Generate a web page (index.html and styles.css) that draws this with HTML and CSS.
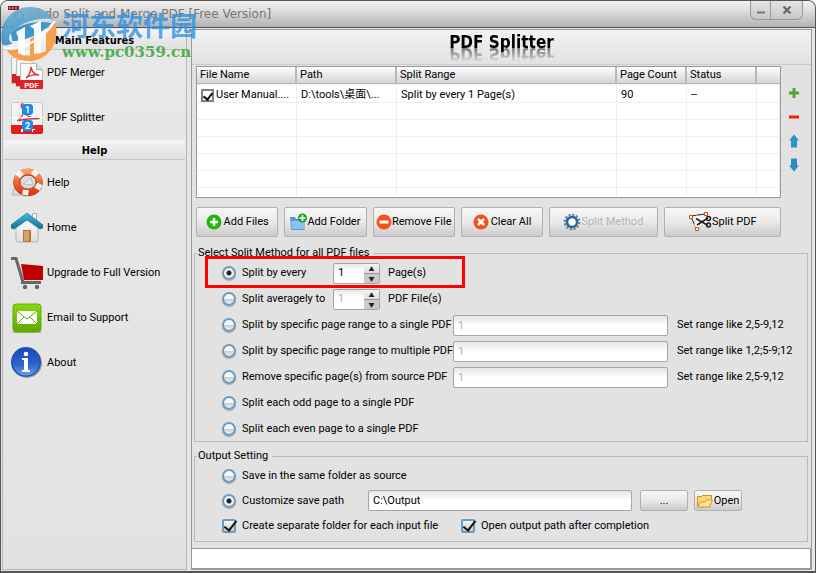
FILE: index.html
```
<!DOCTYPE html>
<html lang="en">
<head>
<meta charset="utf-8">
<title>Okdo Split and Merge PDF</title>
<link rel="stylesheet" href="styles.css">
</head>
<body>
<div class="window">
  <header class="titlebar">
    <svg class="app-icon" width="18" height="18" viewBox="0 0 18 18"><path fill="#8e1626" d="M1 1h11v4H1z"/><path stroke="#e8c6cb" d="M2 3h9" stroke-dasharray="2 1"/><circle cx="12" cy="11" r="4" fill="#fff" stroke="#1d5788" stroke-width="2.5" stroke-dasharray="2.2 1"/></svg>
    <span class="title">Okdo Split and Merge PDF [Free Version]</span>
    <div class="win-buttons">
      <button type="button" aria-label="Minimize"><svg width="10" height="10" viewBox="0 0 10 10"><path d="M1 7.5h8" stroke="#777" stroke-width="2"/></svg></button>
      <button type="button" class="close" aria-label="Close"><svg width="10" height="10" viewBox="0 0 10 10"><path d="M1.500 1.500l7 7M8.500 1.500l-7 7" stroke="#666" stroke-width="2.2"/></svg></button>
    </div>
  </header>
  <div class="content">
    <nav class="sidebar">
      <h2>Main Features</h2>
      <a href="#merger"><svg width="32" height="32" viewBox="0 0 32 32"><g stroke="#bbb"><path fill="#f3f3f3" d="M.500.500h13l5 5v21h-18z"/><path fill="#d91e1e" stroke="none" d="M1 17h5v9H1z"/><path fill="#f6f6f6" d="M5.500 2.500h13l5 5v22h-18z"/><path fill="#d91e1e" stroke="none" d="M5 19h5v10H5z"/><path fill="#fafafa" d="M9.500 6.500h16l6 6v19h-22z"/></g><path fill="#ddd" stroke="#aaa" d="M25.500 6.500v6h6"/><path d="M9 23h23v9H9z" fill="#e2231f"/><path fill="none" stroke="#d53a3a" stroke-width="1.400" d="M15 21c2-1 5-6 5-11 1 5 3 8 8 8-4-1-8 0-13 3"/><text x="20.500" y="31" text-anchor="middle" class="pdf-tag">PDF</text></svg>PDF Merger</a>
      <a href="#splitter"><svg width="32" height="32" viewBox="0 0 32 32"><rect x=".5" y=".5" width="31" height="31" rx="1.500" fill="#f3f3f3" stroke="#ccc"/><path d="M0 23h32v7q0 2-2 2H2q-2 0-2-2z" fill="#df1f1d"/><path d="M6 19c5-2 8-10 6-17-2-1-3 2 0 6 4 8 10 8 16 8 2 2-12-1-20 3" fill="none" stroke="#d63434" stroke-width="1.300"/><path d="M0 15.500h32" stroke="#fff"/><path fill="#fff" d="M10 27h2v3h-2zm11 0h3v1h-2v2h-1z"/><path fill="#1d8bed" d="M13 2h7l2 2v7l-2 2h-7l-2-2V4zM13 18h7l2 2v7l-2 2h-7l-2-2v-7z"/><text x="16.500" y="11" text-anchor="middle" class="num-tag">1</text><text x="16.500" y="27" text-anchor="middle" class="num-tag">2</text></svg>PDF Splitter</a>
      <h2 class="help-head">Help</h2>
      <a href="#help"><svg width="32" height="32" viewBox="0 0 32 32"><defs><linearGradient id="ring" x2="0" y2="1"><stop stop-color="#f79a63"/><stop offset="1" stop-color="#e3370f"/></linearGradient></defs><path d="M4 19l-3 9h14z" fill="#ddd" stroke="#b5b5b5"/><ellipse cx="17" cy="15.500" rx="11.500" ry="10.500" fill="#dcdcdc" stroke="#b94423" stroke-width="6.500"/><ellipse cx="17" cy="15" rx="11.500" ry="10.500" fill="none" stroke="url(#ring)" stroke-width="6"/><g stroke="#f6f6f6" stroke-width="6"><path d="M6 5l5 4M26 4l-4 4M30 21l-5-3M14 28l1-5"/></g><ellipse cx="17" cy="15" rx="8" ry="7" fill="none" stroke="#b83a2a"/><path d="M12 17l8-6 2 7z" fill="#e8e8e8" stroke="#bbb"/></svg>Help</a>
      <a href="#home"><svg width="32" height="32" viewBox="0 0 32 32"><defs><linearGradient id="roof" x2="0" y2="1"><stop stop-color="#45bade"/><stop offset="1" stop-color="#146f94"/></linearGradient><linearGradient id="wall" x2="0" y2="1"><stop stop-color="#fff"/><stop offset="1" stop-color="#ddd"/></linearGradient></defs><path d="M21.500 5V1.500h4V9" fill="#fff" stroke="#aaa"/><path d="M5 14L16 5l11 9v14q0 2-2 2H7q-2 0-2-2z" fill="url(#wall)" stroke="#b5b5b5"/><path d="M12 18h8v12h-8z" fill="#b87532"/><path d="M13 19h5v10h-5z" fill="#d8a267"/><path d="M0 13L16 1l16 12v3l-3 1-13-9L3 17l-3-1z" fill="url(#roof)" stroke="#16789b" stroke-width=".7"/></svg>Home</a>
      <a href="#upgrade"><svg width="32" height="32" viewBox="0 0 32 32"><path d="M10 7l22 2v14H13z" fill="#c00000"/><path d="M0 1.500h5L12 25M10 25.500h20" fill="none" stroke="#666" stroke-width="3"/><circle cx="14" cy="30" r="2.200" fill="#666"/><circle cx="26" cy="30" r="2.200" fill="#666"/></svg>Upgrade to Full Version</a>
      <a href="#email"><svg width="32" height="32" viewBox="0 0 32 32"><defs><linearGradient id="mail" x2="0" y2="1"><stop stop-color="#83dc0c"/><stop offset="1" stop-color="#62a500"/></linearGradient></defs><path d="M1 30.500h30" stroke="#bbb"/><rect x="2" y="2" width="28" height="28" rx="3" fill="url(#mail)" stroke="#68a80c"/><path d="M6 9h20v13H6z" fill="#fff"/><path d="M6 9l10 8 10-8M6 22l7-7M26 22l-7-7" fill="none" stroke="#62a500"/></svg>Email to Support</a>
      <a href="#about"><svg width="32" height="32" viewBox="0 0 32 32"><defs><linearGradient id="info" x2="0" y2="1"><stop stop-color="#1c47b2"/><stop offset=".6" stop-color="#2c65cf"/><stop offset="1" stop-color="#66a0f0"/></linearGradient></defs><circle cx="16" cy="16" r="15" fill="#999"/><circle cx="15" cy="15" r="15" fill="#2451b0"/><circle cx="15" cy="15" r="13.500" fill="url(#info)"/><circle cx="15" cy="7" r="2.300" fill="#fff"/><path d="M11 11h6v12h2v2h-8v-2h2V13h-2z" fill="#fff"/></svg>About</a>
    </nav>

    <main class="panel">
      <div class="heading"><h1>PDF Splitter</h1></div>
      <div class="list-area">
        <div class="table-box">
          <table>
            <colgroup><col class="c-name"><col class="c-path"><col><col class="c-count"><col class="c-status"><col class="c-end"></colgroup>
            <thead><tr><th>File Name</th><th>Path</th><th>Split Range</th><th>Page Count</th><th>Status</th><th></th></tr></thead>
            <tbody>
              <tr><td class="file"><label><input type="checkbox" class="tick" checked>User Manual....</label></td><td>D:\tools\桌面\...</td><td>Split by every 1 Page(s)</td><td>90</td><td>--</td><td></td></tr>
              <tr><td></td><td></td><td></td><td></td><td></td><td></td></tr>
              <tr><td></td><td></td><td></td><td></td><td></td><td></td></tr>
              <tr><td></td><td></td><td></td><td></td><td></td><td></td></tr>
              <tr><td></td><td></td><td></td><td></td><td></td><td></td></tr>
              <tr><td></td><td></td><td></td><td></td><td></td><td></td></tr>
              <tr><td></td><td></td><td></td><td></td><td></td><td></td></tr>
            </tbody>
          </table>
        </div>
        <div class="side-tools">
          <button type="button" aria-label="Add"><svg width="14" height="14" viewBox="0 0 14 14"><path d="M5.500 2h3v3.500H12v3H8.500V12h-3V8.500H2v-3h3.500z" fill="#5aa02c"/></svg></button>
          <button type="button" aria-label="Remove"><svg width="14" height="14" viewBox="0 0 14 14"><path d="M2 5.500h10v3H2z" fill="#ee2208"/></svg></button>
          <button type="button" aria-label="Move up"><svg width="14" height="14" viewBox="0 0 14 14"><path d="M7 .5l5 6H10v7H4v-7H2z" fill="#2d93c9"/></svg></button>
          <button type="button" aria-label="Move down"><svg width="14" height="14" viewBox="0 0 14 14"><path d="M7 13.500l5-6H10v-7H4v7H2z" fill="#2d8dc0"/></svg></button>
        </div>
      </div>

      <div class="toolbar">
        <button type="button"><svg width="16" height="16" viewBox="0 0 16 16"><circle cx="8" cy="8" r="7.500" fill="#25b50d"/><path d="M8 4v8M4 8h8" stroke="#fff" stroke-width="2.500"/></svg>Add Files</button>
        <button type="button" class="tight"><svg width="17" height="18" viewBox="0 0 17 18"><path d="M0 4h5l1 2h9v10l-1 1H2l-1-1z" fill="#5797dc"/><path d="M1 8h14v8H2z" fill="#90bff2"/><circle cx="12.500" cy="5" r="4.500" fill="#1b9f25"/><path d="M12.500 2v6M9.500 5h6" stroke="#fff" stroke-width="1.600"/></svg>Add Folder</button>
        <button type="button" class="tight"><svg width="16" height="16" viewBox="0 0 16 16"><circle cx="8" cy="8" r="7.500" fill="#f4501c"/><path d="M3.500 8h9" stroke="#fff" stroke-width="3"/></svg>Remove File</button>
        <button type="button"><svg width="16" height="16" viewBox="0 0 16 16"><circle cx="8" cy="8" r="7.500" fill="#f4501c"/><path d="M5 5l6 6M11 5l-6 6" stroke="#fff" stroke-width="2.500"/></svg>Clear All</button>
        <button type="button" class="tight" disabled><svg width="18" height="18" viewBox="0 0 18 18"><circle cx="9" cy="9" r="7" fill="none" stroke="#858b90" stroke-width="3" stroke-dasharray="2.200 1.460"/><circle cx="9" cy="9" r="5" fill="#fff" stroke="#2168ae" stroke-width="2.500"/></svg>Split Method</button>
        <button type="button" class="tight"><svg width="24" height="20" viewBox="0 0 24 20"><path d="M3 4L17 2M3 5l5 11" fill="none" stroke="#222"/><path d="M7 5l13 8M7 14l13-8" stroke="#fff" stroke-width="4"/><path d="M8 6.500l12 7M9 13l11-7" stroke="#222" stroke-width="1.800"/><circle cx="20.500" cy="6.500" r="2" fill="none" stroke="#222" stroke-width="1.500"/><circle cx="20.500" cy="13" r="2" fill="none" stroke="#222" stroke-width="1.500"/><path d="M1.500 3.500h3v3h-3zM16.500.5h3v3h-3zM7.500 15.500h3v3h-3z" fill="#fff" stroke="#e34419"/></svg>Split PDF</button>
      </div>

      <fieldset class="methods">
        <legend>Select Split Method for all PDF files</legend>
        <div class="row"><label class="lead"><input type="radio" name="m" checked>Split by every</label><span class="spin"><input type="number" value="1" aria-label="Pages"><span class="steps"><button type="button" aria-label="More">▲</button><button type="button" aria-label="Fewer">▼</button></span></span><span>Page(s)</span></div>
        <div class="row"><label class="lead"><input type="radio" name="m">Split averagely to</label><span class="spin"><input type="number" value="1" disabled aria-label="Files"><span class="steps"><button type="button" aria-label="More">▲</button><button type="button" aria-label="Fewer">▼</button></span></span><span>PDF File(s)</span></div>
        <div class="row"><label class="range"><input type="radio" name="m">Split by specific page range to a single PDF</label><input class="text" value="1" disabled aria-label="Single PDF range"><span class="hint">Set range like 2,5-9,12</span></div>
        <div class="row"><label class="range"><input type="radio" name="m">Split by specific page range to multiple PDF</label><input class="text" value="1" disabled aria-label="Multiple PDF range"><span class="hint">Set range like 1,2;5-9;12</span></div>
        <div class="row"><label class="range"><input type="radio" name="m">Remove specific page(s) from source PDF</label><input class="text" value="1" disabled aria-label="Pages to remove"><span class="hint">Set range like 2,5-9,12</span></div>
        <div class="row"><label><input type="radio" name="m">Split each odd page to a single PDF</label></div>
        <div class="row"><label><input type="radio" name="m">Split each even page to a single PDF</label></div>
        <div class="marker"></div>
      </fieldset>

      <fieldset class="output">
        <legend>Output Setting</legend>
        <div class="row"><label><input type="radio" name="o">Save in the same folder as source</label></div>
        <div class="row"><label class="custom"><input type="radio" name="o" checked>Customize save path</label><input class="text path" value="C:\Output" aria-label="Save path"><button type="button" class="small">...</button><button type="button" class="small"><svg width="16" height="14" viewBox="0 0 16 14"><path d="M.5 12.500V2.500h4l1-1h9v4" fill="#fbd873" stroke="#cf8c20"/><path d="M.5 13l3-5h4l2-2h6l-3 7z" fill="#ffe38e" stroke="#d3922a"/></svg>Open</button></div>
        <div class="row"><label class="separate"><input type="checkbox" checked>Create separate folder for each input file</label><label><input type="checkbox" checked>Open output path after completion</label></div>
      </fieldset>
      <div class="status"></div>
    </main>
  </div>

  <div class="watermark">
    <svg width="58" height="58" viewBox="0 0 58 58"><defs><linearGradient id="blue" x2="0" y2="1"><stop stop-color="#6daed0"/><stop offset="1" stop-color="#2e8cc4"/></linearGradient></defs><circle cx="28" cy="28" r="26" fill="#fff" opacity=".4"/><path opacity=".88" d="M1 38C-3 17 11 1 29 1c11 0 19 5 23 12-20-2-37 6-43 16-2 4 0 8 3 8-5 3-9 3-11 1z" fill="url(#blue)"/><path d="M54 17c6 19-7 38-26 38-11 0-19-5-23-12 6 0 10-1 15-4v9l9 2V33l8-5v20l8-3V24c5-3 8-5 9-7z" fill="#f5a04e"/><path d="M10 27c7-8 24-13 40-10-5 8-26 19-39 18z" fill="#3f96c8"/><path d="M15 26l9-5v29l-7-3V31zM29 20l11-5v31l-7 2V23z" fill="#fff" opacity=".95"/><path d="M2 41c12 6 39-5 52-26" fill="none" stroke="#fff" stroke-width="2"/></svg>
    <div class="mark-text"><span class="mark-name">河东软件园</span><span class="mark-url">www.pc0359.cn</span></div>
  </div>
</div>
</body>
</html>
```
FILE: styles.css
```
* { box-sizing: border-box; }
body { margin: 0; background: #fff; }
body, button, input {
  font-family: Roboto, "Noto Sans CJK SC", sans-serif;
  font-size: 11px;
  line-height: 14px;
  color: #000;
}
.window {
  position: relative;
  display: flex;
  flex-direction: column;
  min-height: 100vh;
  border: 1px solid #555;
  border-bottom-width: 2px;
  border-radius: 8px 8px 0 0;
  background: #e6e6e6;
  overflow: hidden;
}
.titlebar {
  display: flex;
  align-items: center;
  height: 27px;
  padding: 0 12px 0 6px;
  gap: 3px;
  border-bottom: 1px solid #555;
  background: linear-gradient(#f4f4f4, #d8d8d8 45%, #b2b2b2);
}
.title { flex: 1; font-family: "DejaVu Sans", sans-serif; font-size: 12px; line-height: 16px; color: #777; }
.win-buttons { display: flex; align-self: flex-start; }
.win-buttons button {
  display: grid;
  place-items: center;
  width: 21px;
  height: 19px;
  padding: 0;
  border: 1px solid #999;
  border-top: 0;
  border-radius: 0 0 0 6px;
  background: linear-gradient(#e4e4e4, #c8c8c8);
}
.win-buttons .close { width: 32px; border-left: 0; border-radius: 0 0 6px 0; }

.content { flex: 1; display: flex; gap: 4px; padding: 1px 3px 1px 1px; }
.sidebar {
  width: 185px;
  padding: 0 1px;
  border: 1px solid #b5b5b5;
  border-top: 0;
  background: linear-gradient(#e8e8e8, #e2e2e2);
}
.sidebar h2 {
  margin: 0;
  height: 21px;
  border-bottom: 1px solid #c8c8c8;
  background: linear-gradient(#f5f5f5, #dfdfdf);
  font-family: "DejaVu Sans Condensed", sans-serif;
  font-size: 11px;
  line-height: 24px;
  text-align: center;
}
.sidebar .help-head { height: 20px; line-height: 22px; }
.sidebar a {
  display: flex;
  align-items: center;
  gap: 4px;
  height: 45px;
  padding-left: 7px;
  color: #000;
  text-decoration: none;
}
.pdf-tag { font-size: 8px; font-weight: bold; fill: #fff; }
.num-tag { font-size: 9px; font-weight: bold; fill: #fff; }

.panel {
  flex: 1;
  display: flex;
  flex-direction: column;
  min-width: 0;
  border: 1px solid #999;
  background: #e2e2e2;
}
.heading {
  height: 35px;
  border-bottom: 1px solid #ccc;
  background: linear-gradient(#f3f3f3, #e2e2e2);
  text-align: center;
}
.heading h1 {
  display: inline-block;
  margin: 2px 0 0;
  font-family: "DejaVu Sans Condensed", sans-serif;
  font-size: 17px;
  line-height: 20px;
  -webkit-box-reflect: below -8px linear-gradient(transparent 10%, rgba(0, 0, 0, .5) 80%);
}
.list-area { display: flex; margin: 1px 5px 0 4px; }
.table-box { flex: 1; height: 132px; border: 1px solid #999; background: #fff; overflow: hidden; }
table { width: 100%; border-collapse: separate; border-spacing: 0; table-layout: fixed; }
.c-name, .c-path { width: 100px; }
.c-count, .c-status { width: 70px; }
.c-end { width: 23px; }
th {
  height: 17px;
  padding: 0 3px;
  border-right: 2px solid #b8b8b8;
  border-bottom: 1px solid #b8b8b8;
  background: linear-gradient(#fff, #d4d4d4);
  font-weight: normal;
  text-align: left;
  white-space: nowrap;
}
th:last-child { border-right: 0; }
td {
  height: 17px;
  padding: 0 4px;
  border-right: 1px solid #eee;
  border-bottom: 1px solid #eee;
  line-height: 14px;
  white-space: nowrap;
  overflow: hidden;
}
tbody tr:first-child td { border-top: 1px solid #eee; height: 19px; padding-top: 3px; }
td label { gap: 2px; }
.side-tools { display: flex; flex-direction: column; gap: 10px; width: 25px; padding: 20px 0 0 6px; }
.side-tools button { display: flex; padding: 0; border: 0; background: none; }

.toolbar { display: grid; grid-template-columns: 82fr 82fr 82fr 82fr 108fr 117fr; gap: 6px; margin: 9px 30px 0 4px; }
.toolbar button, .small {
  display: flex;
  align-items: center;
  justify-content: center;
  gap: 2px;
  height: 30px;
  padding: 0;
  border: 1px solid #b0b0b0;
  border-radius: 2px;
  background: linear-gradient(#f8f8f8, #e9e9e9 50%, #cbcbcb);
  white-space: nowrap;
}
.toolbar .tight { gap: 0; }
.toolbar button:disabled { color: #b5b5b5; }

fieldset { position: relative; min-width: 0; margin: 0 3px 0 2px; padding: 0 0 0 27px; border: 1px solid #bbb; }
legend { margin-left: -25px; padding: 0 4px 0 1px; line-height: 14px; }
.methods { margin-top: 9px; height: 196px; }
.output { margin-top: 7px; height: 93px; }
.row { display: flex; align-items: center; height: 26px; }
label { display: flex; align-items: center; gap: 6px; white-space: nowrap; }
.lead { width: 111px; }
.range { width: 231px; }
input { margin: 0; }
input[type="radio"] {
  appearance: none;
  flex: none;
  width: 14px;
  height: 14px;
  border: 2px solid #6c9bbd;
  border-radius: 50%;
  background: linear-gradient(#f3f7fa 45%, #c8ccce 50%, #eee);
  box-shadow: 0 1px 1px #aaa;
}
input[type="radio"]:checked { background: radial-gradient(circle, #222 0 2px, #edf1f4 3px); }
input[type="checkbox"] {
  appearance: none;
  flex: none;
  width: 14px;
  height: 14px;
  border: 2px solid #6c9bbd;
  border-radius: 2px;
  background: linear-gradient(#f3f7fa, #c8ccce);
  position: relative;
}
input[type="checkbox"]:checked::after {
  content: "";
  position: absolute;
  left: 3px;
  top: -3px;
  width: 5px;
  height: 11px;
  border: solid #111;
  border-width: 0 2px 2px 0;
  transform: rotate(38deg);
}
input.tick { width: 13px; height: 13px; border-color: #808080; border-radius: 0; background: #fff; }
input.tick:checked::after { left: 2px; top: 0; width: 4px; height: 7px; }
.spin {
  display: flex;
  width: 47px;
  height: 21px;
  margin-right: 8px;
  border: 1px solid #a5a5a5;
  border-radius: 2px;
  background: linear-gradient(#e9e9e9, #fff 40%);
}
.spin input { appearance: textfield; width: 30px; padding: 0 4px; border: 0; background: none; }
.spin input::-webkit-inner-spin-button { appearance: none; }
.steps { display: grid; flex: 1; }
.steps button { padding: 0; border: 0; background: linear-gradient(#f4f4f4, #ddd); font-size: 6px; line-height: 9px; color: #222; }
.steps button + button { border-top: 1px solid #999; background: #c9c9c9; }
.text {
  flex: 0 1 215px;
  min-width: 60px;
  height: 21px;
  padding: 0 4px;
  border: 1px solid #a5a5a5;
  border-radius: 2px;
  background: linear-gradient(#e4e4e4, #fff 50%);
}
input:disabled { color: #b5b5b5; }
.hint { margin-left: 9px; white-space: nowrap; }
.output .row { height: 25px; }
.custom { width: 146px; }
.path { flex-basis: 264px; }
.small { width: 48px; height: 21px; margin-left: 8px; gap: 1px; }
.small + .small { margin-left: 6px; }
.separate { width: 239px; }
.marker { position: absolute; left: 10px; top: -4px; width: 260px; height: 32px; border: 3px solid #f00; pointer-events: none; }
.status { height: 21px; margin-top: auto; border-top: 1px solid #999; border-right: 1px solid #999; border-bottom: 1px solid #999; background: #fff; }

.watermark { position: absolute; left: 0; top: 5px; display: flex; gap: 3px; pointer-events: none; }
.mark-text { display: flex; flex-direction: column; padding-top: 3px; }
.mark-name { font: bold 27px/32px "Noto Sans CJK SC", sans-serif; color: rgba(42, 145, 232, .8); }
.mark-url { font: bold 15px/22px "DejaVu Serif", serif; color: #55ad50; }
```
